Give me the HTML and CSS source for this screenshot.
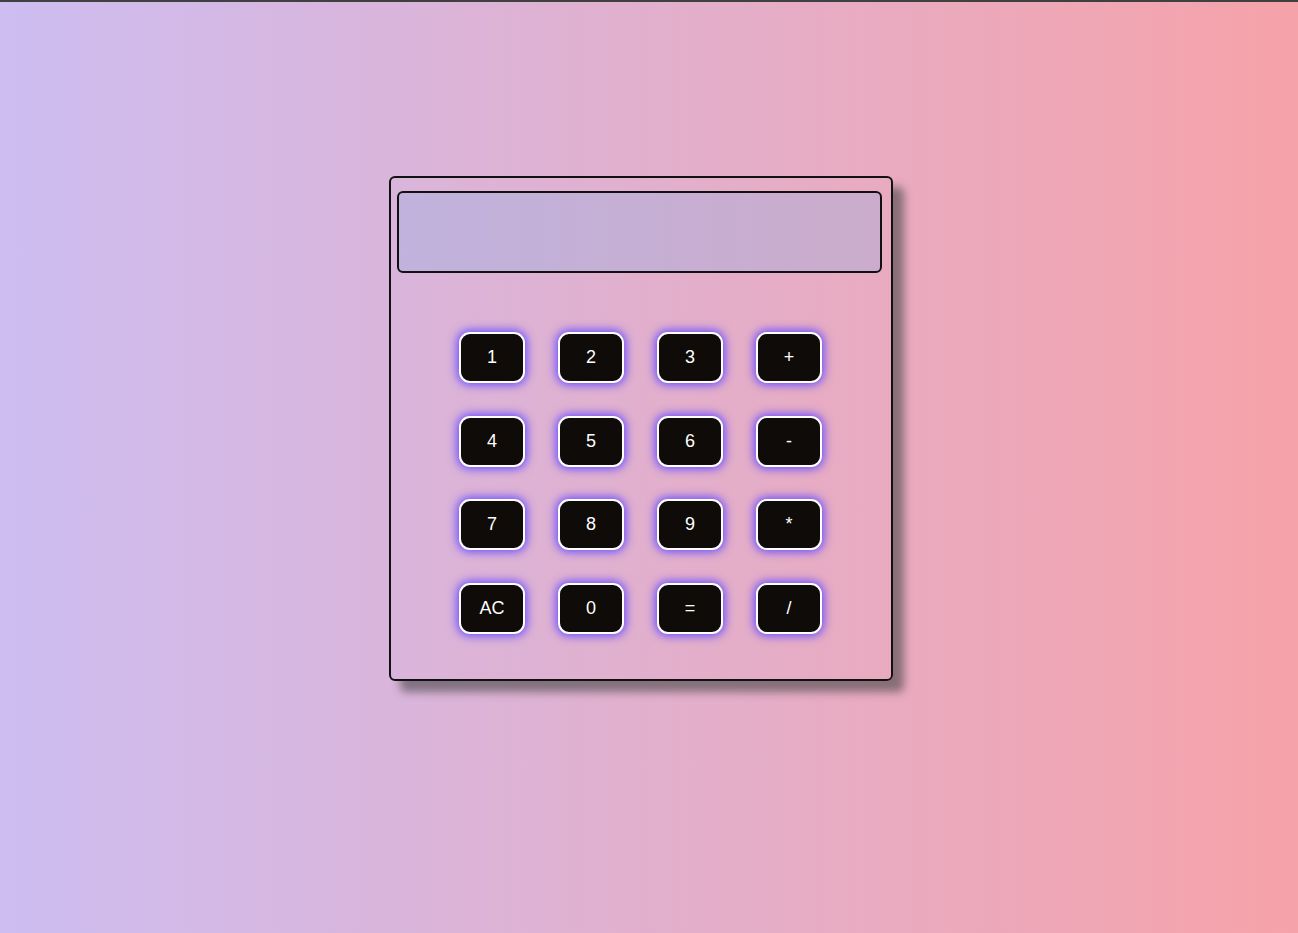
FILE: index.html
```html
<!DOCTYPE html>
<html>
<head>
<meta charset="utf-8">
<title>Calculator</title>
<link rel="stylesheet" href="styles.css">
</head>
<body>
<div class="page">
  <div class="calc">
    <div class="display"></div>
    <div class="keys">
      <button class="key">1</button>
      <button class="key">2</button>
      <button class="key">3</button>
      <button class="key">+</button>
      <button class="key">4</button>
      <button class="key">5</button>
      <button class="key">6</button>
      <button class="key">-</button>
      <button class="key">7</button>
      <button class="key">8</button>
      <button class="key">9</button>
      <button class="key">*</button>
      <button class="key">AC</button>
      <button class="key">0</button>
      <button class="key">=</button>
      <button class="key">/</button>
    </div>
  </div>
</div>
</body>
</html>
```
FILE: styles.css
```css
html, body {
  margin: 0;
  padding: 0;
}
body {
  font-family: "Liberation Sans", Arial, sans-serif;
}
.page {
  box-sizing: border-box;
  min-height: 933px;
  border-top: 2px solid #404040;
  background: linear-gradient(to right, #cdbdf1, #f6a2a9);
  padding: 175px 0 0 389px;
}
.calc {
  box-sizing: border-box;
  width: 504px;
  height: 505px;
  border: 2px solid #111;
  border-radius: 6px;
  box-shadow: 11px 11px 9px rgba(70, 70, 70, 0.6);
  padding: 13px 0 0 6px;
  margin-top: -1px;
}
.display {
  box-sizing: border-box;
  width: 485px;
  height: 82px;
  border: 2px solid #111;
  border-radius: 6px;
  background: rgba(140, 175, 228, 0.32);
}
.keys {
  display: grid;
  grid-template-columns: repeat(4, 66px);
  grid-auto-rows: 51px;
  column-gap: 33px;
  row-gap: 32.7px;
  margin: 59px 0 0 62px;
}
.key {
  box-sizing: border-box;
  width: 66px;
  height: 51px;
  background: #0e0b08;
  color: #fff;
  border: 2px solid #fff;
  border-radius: 11px;
  box-shadow: 0 0 10px 2px #6a4cff;
  font-family: "Liberation Sans", Arial, sans-serif;
  font-size: 18px;
  padding: 0;
  cursor: pointer;
}
```
